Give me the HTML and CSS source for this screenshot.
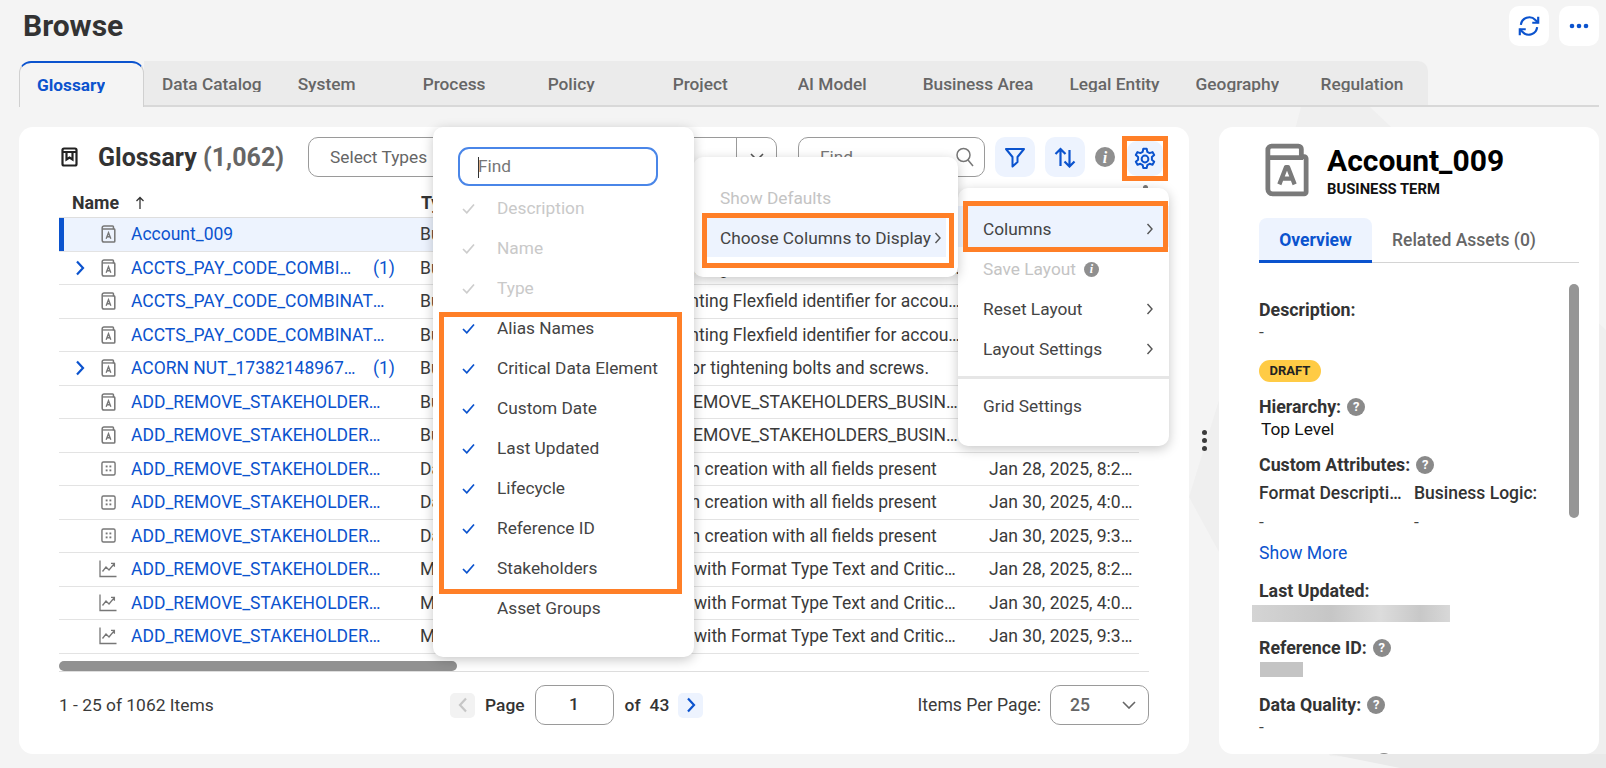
FILE: index.html
```html
<!DOCTYPE html>
<html lang="en">
<head>
<meta charset="utf-8">
<title>Browse</title>
<link rel="stylesheet" href="styles.css">
</head>
<body>
<svg class="sprite" width="0" height="0" aria-hidden="true">
  <symbol id="i-term" viewBox="0 0 16 20"><path d="M3 1h9.500a1 1 0 0 1 1 1v2.200h.5a1 1 0 0 1 1 1V18a1 1 0 0 1-1 1H3a2 2 0 0 1-2-2V3a2 2 0 0 1 2-2z" fill="none" stroke="currentColor" stroke-width="1.700"/><path d="M1.500 4.400H14" fill="none" stroke="currentColor" stroke-width="1.500"/><path d="M5.400 15.400L8 8.600l2.600 6.800M6.400 13h3.200" fill="none" stroke="currentColor" stroke-width="1.500"/></symbol>
  <symbol id="i-elem" viewBox="0 0 16 16"><rect x="1" y="1" width="14" height="14" rx="1.600" fill="none" stroke="currentColor" stroke-width="1.500"/><g fill="currentColor"><rect x="5" y="4.800" width="2" height="2"/><rect x="9" y="4.800" width="2" height="2"/><rect x="5" y="9" width="2" height="2"/><rect x="9" y="9" width="2" height="2"/></g></symbol>
  <symbol id="i-metric" viewBox="0 0 18 18"><path d="M1 0.500V16.500H17.500" fill="none" stroke="currentColor" stroke-width="1.300"/><path d="M3.500 11.500L7 7l3 3 5-6M12 3.400h3.400v3.400" fill="none" stroke="currentColor" stroke-width="1.300"/></symbol>
  <symbol id="i-chev" viewBox="0 0 10 16"><path d="M2 1.500L8 8l-6 6.500" fill="none" stroke="currentColor" stroke-width="2.200"/></symbol>
  <symbol id="i-thin" viewBox="0 0 8 14"><path d="M1.500 2L6 7l-4.500 5" fill="none" stroke="currentColor" stroke-width="1.400"/></symbol>
  <symbol id="i-down" viewBox="0 0 14 8"><path d="M1 1l6 6 6-6" fill="none" stroke="currentColor" stroke-width="1.600"/></symbol>
  <symbol id="i-check" viewBox="0 0 13 11"><path d="M1 6l3.800 3.800L12 1.500" fill="none" stroke="currentColor" stroke-width="1.700"/></symbol>
</svg>

<div class="page">
  <svg class="bg-shapes" viewBox="0 0 1606 768" aria-hidden="true">
    <polygon points="1301,107 1370,107 1606,330 1606,768 1330,756 1189,497 1250,300" fill="#efefef"/>
    <polygon points="1330,754 1606,754 1606,768 1400,768" fill="#e9e9e9"/>
  </svg>

  <header class="topbar">
    <h1 class="page-title">Browse</h1>
    <div class="top-actions">
      <button class="icon-btn white"><svg width="26" height="26" viewBox="0 0 24 24" fill="none" stroke="#0b53ce" stroke-width="2"><path d="M4.500 11a7.800 7.800 0 0 1 13.400-4.600L20.500 9"/><path d="M20.500 3.500V9H15"/><path d="M19.500 13a7.800 7.800 0 0 1-13.400 4.600L3.500 15"/><path d="M3.500 20.500V15H9"/></svg></button>
      <button class="icon-btn white"><svg width="22" height="6" viewBox="0 0 22 6" fill="#0b53ce"><circle cx="4" cy="3" r="2.300"/><circle cx="11" cy="3" r="2.300"/><circle cx="18" cy="3" r="2.300"/></svg></button>
    </div>
  </header>

  <nav class="tabs">
    <div class="tab active"><span>Glossary</span></div>
    <div class="tab"><span>Data Catalog</span></div>
    <div class="tab"><span>System</span></div>
    <div class="tab"><span>Process</span></div>
    <div class="tab"><span>Policy</span></div>
    <div class="tab"><span>Project</span></div>
    <div class="tab"><span>AI Model</span></div>
    <div class="tab"><span>Business Area</span></div>
    <div class="tab"><span>Legal Entity</span></div>
    <div class="tab"><span>Geography</span></div>
    <div class="tab"><span>Regulation</span></div>
  </nav>

  <main class="panels">
    <section class="panel list-panel">
      <div class="toolbar">
        <svg class="book" width="17" height="20" viewBox="0 0 17 20" fill="none" stroke="#222" stroke-width="2.200"><rect x="1.500" y="1.500" width="14" height="17" rx="1.500"/><path d="M1.500 5h14M5.500 5v7.500l3-2 3 2V5"/></svg>
        <h2 class="list-title">Glossary <span class="count">(1,062)</span></h2>
        <div class="select-types"><span>Select Types</span><span class="select-caret"><svg width="14" height="8"><use href="#i-down"/></svg></span></div>
        <div class="find-box"><span>Find</span><svg width="20" height="22" viewBox="0 0 20 22" fill="none" stroke="#777" stroke-width="1.500"><circle cx="8.500" cy="9" r="6.500"/><path d="M13 14l5 6"/></svg></div>
        <button class="icon-btn tint"><svg width="22" height="21" viewBox="0 0 22 21" fill="none" stroke="#0b53ce" stroke-width="2" stroke-linejoin="round"><path d="M2 2h18l-6.500 8v5l-5 4.500V10z"/></svg></button>
        <button class="icon-btn tint"><svg width="22" height="21" viewBox="0 0 22 21" fill="none" stroke="#0b53ce" stroke-width="2.200"><path d="M6.500 19V2M1.500 7l5-5 5 5"/><path d="M15.500 3v16.500M10.500 14.500l5 5 5-5"/></svg></button>
        <span class="info-dot big">i</span>
        <button class="icon-btn tint gear"><svg width="24" height="24" viewBox="0 0 24 24" fill="none" stroke="#0b53ce" stroke-width="2" stroke-linejoin="round"><circle cx="12" cy="12" r="3.400"/><path d="M10.300 1.800h3.400l.6 3 2.300 1.300 2.900-1 1.700 3-2.300 2v2.700l2.300 2-1.700 3-2.900-1-2.300 1.300-.6 3h-3.400l-.6-3-2.300-1.300-2.900 1-1.700-3 2.300-2v-2.700l-2.300-2 1.700-3 2.900 1 2.300-1.300z"/></svg></button>
      </div>

      <div class="thead">
        <div class="th-name">Name <svg width="10" height="14" viewBox="0 0 10 14" fill="none" stroke="#333" stroke-width="1.300"><path d="M5 13V2M1.500 5L5 1.500 8.500 5"/></svg></div>
        <div>Type</div>
        <div>Description</div>
        <div>Last Updated</div>
        <i class="col-menu"></i>
      </div>

      <div class="tbody">
        <div class="row selected"><span class="expander"></span><svg class="asset" width="15" height="18"><use href="#i-term"/></svg><a class="name">Account_009</a><span class="type">Business Term</span><span class="desc">Accounting Flexfield identifier for accounts</span><span class="date">Jan 28, 2025, 8:21 AM</span></div>
        <div class="row"><svg class="expander" width="10" height="16"><use href="#i-chev"/></svg><svg class="asset" width="15" height="18"><use href="#i-term"/></svg><a class="name short">ACCTS_PAY_CODE_COMBINATIONS</a><span class="kids">(1)</span><span class="type">Business Term</span><span class="desc">Accounting Flexfield identifier for accounts</span><span class="date">Jan 28, 2025, 8:21 AM</span></div>
        <div class="row"><span class="expander"></span><svg class="asset" width="15" height="18"><use href="#i-term"/></svg><a class="name">ACCTS_PAY_CODE_COMBINATIONS_ID</a><span class="type">Business Term</span><span class="desc">Accounting Flexfield identifier for accounts payable</span><span class="date">Jan 28, 2025, 8:21 AM</span></div>
        <div class="row"><span class="expander"></span><svg class="asset" width="15" height="18"><use href="#i-term"/></svg><a class="name">ACCTS_PAY_CODE_COMBINATIONS_ID</a><span class="type">Business Term</span><span class="desc">Accounting Flexfield identifier for accounts payable</span><span class="date">Jan 28, 2025, 8:21 AM</span></div>
        <div class="row"><svg class="expander" width="10" height="16"><use href="#i-chev"/></svg><svg class="asset" width="15" height="18"><use href="#i-term"/></svg><a class="name short">ACORN NUT_1738214896712</a><span class="kids">(1)</span><span class="type">Business Term</span><span class="desc">Used for tightening bolts and screws.</span><span class="date">Jan 28, 2025, 8:21 AM</span></div>
        <div class="row"><span class="expander"></span><svg class="asset" width="15" height="18"><use href="#i-term"/></svg><a class="name">ADD_REMOVE_STAKEHOLDERS_BUSINESS</a><span class="type">Business Term</span><span class="desc">ADD_REMOVE_STAKEHOLDERS_BUSINESS_TERM</span><span class="date">Jan 28, 2025, 8:21 AM</span></div>
        <div class="row"><span class="expander"></span><svg class="asset" width="15" height="18"><use href="#i-term"/></svg><a class="name">ADD_REMOVE_STAKEHOLDERS_BUSINESS</a><span class="type">Business Term</span><span class="desc">ADD_REMOVE_STAKEHOLDERS_BUSINESS_TERM</span><span class="date">Jan 30, 2025, 4:02 PM</span></div>
        <div class="row"><span class="expander"></span><svg class="asset" width="15" height="15"><use href="#i-elem"/></svg><a class="name">ADD_REMOVE_STAKEHOLDERS_DATA</a><span class="type">Data Element</span><span class="desc">Domain creation with all fields present</span><span class="date">Jan 28, 2025, 8:21 AM</span></div>
        <div class="row"><span class="expander"></span><svg class="asset" width="15" height="15"><use href="#i-elem"/></svg><a class="name">ADD_REMOVE_STAKEHOLDERS_DATA</a><span class="type">Data Element</span><span class="desc">Domain creation with all fields present</span><span class="date">Jan 30, 2025, 4:02 PM</span></div>
        <div class="row"><span class="expander"></span><svg class="asset" width="15" height="15"><use href="#i-elem"/></svg><a class="name">ADD_REMOVE_STAKEHOLDERS_DATA</a><span class="type">Data Element</span><span class="desc">Domain creation with all fields present</span><span class="date">Jan 30, 2025, 9:31 PM</span></div>
        <div class="row"><span class="expander"></span><svg class="asset metric" width="18" height="18"><use href="#i-metric"/></svg><a class="name">ADD_REMOVE_STAKEHOLDERS_METRIC</a><span class="type">Metric</span><span class="desc">Metric with Format Type Text and Critical Data Element</span><span class="date">Jan 28, 2025, 8:21 AM</span></div>
        <div class="row"><span class="expander"></span><svg class="asset metric" width="18" height="18"><use href="#i-metric"/></svg><a class="name">ADD_REMOVE_STAKEHOLDERS_METRIC</a><span class="type">Metric</span><span class="desc">Metric with Format Type Text and Critical Data Element</span><span class="date">Jan 30, 2025, 4:02 PM</span></div>
        <div class="row"><span class="expander"></span><svg class="asset metric" width="18" height="18"><use href="#i-metric"/></svg><a class="name">ADD_REMOVE_STAKEHOLDERS_METRIC</a><span class="type">Metric</span><span class="desc">Metric with Format Type Text and Critical Data Element</span><span class="date">Jan 30, 2025, 9:31 PM</span></div>
        <div class="row"><span class="expander"></span><svg class="asset" width="15" height="18"><use href="#i-term"/></svg></div>
        <div class="hscroll"></div>
      </div>

      <footer class="pager">
        <div>1 - 25 of 1062 Items</div>
        <div class="pager-mid">
          <button class="page-btn off"><svg width="10" height="16"><use href="#i-chev"/></svg></button>
          <span class="page-word">Page</span>
          <div class="page-input">1</div>
          <span class="page-word">of</span>
          <span class="page-word pages">43</span>
          <button class="page-btn on"><svg width="10" height="16"><use href="#i-chev"/></svg></button>
        </div>
        <div class="per-page">Items Per Page:<div class="per-select"><span>25</span><svg width="14" height="8"><use href="#i-down"/></svg></div></div>
      </footer>
    </section>

    <div class="splitter"><i></i><i></i><i></i></div>

    <aside class="panel detail-panel">
      <div class="detail-head">
        <svg class="detail-icon" width="44" height="54" viewBox="0 0 46 56" fill="none" stroke="#7a7a7a" stroke-width="5" stroke-linejoin="round"><path d="M7 3h28a3 3 0 0 1 3 3v8h3a2 2 0 0 1 2 2v35a2 2 0 0 1-2 2H8a5 5 0 0 1-5-5V7a4 4 0 0 1 4-4z"/><path d="M4 15h36"/><path d="M15 43l7-18h2l7 18M17 37h12" stroke-width="4.500"/></svg>
        <div>
          <div class="detail-title">Account_009</div>
          <div class="detail-sub">BUSINESS TERM</div>
        </div>
      </div>
      <div class="detail-tabs">
        <div class="dtab active">Overview</div>
        <div class="dtab">Related Assets (0)</div>
      </div>
      <div class="label first">Description:</div>
      <div class="value">-</div>
      <div class="badge">DRAFT</div>
      <div class="label gap-h">Hierarchy: <span class="help">?</span></div>
      <div class="value dark">Top Level</div>
      <div class="label gap-c">Custom Attributes: <span class="help">?</span></div>
      <div class="attrs">
        <div class="attr-name ell">Format Description:</div>
        <div class="attr-name">Business Logic:</div>
        <div class="value">-</div>
        <div class="value">-</div>
      </div>
      <a class="show-more">Show More</a>
      <div class="label gap-l">Last Updated:</div>
      <div class="blur wide"></div>
      <div class="label gap-r">Reference ID: <span class="help">?</span></div>
      <div class="blur small"></div>
      <div class="label gap-d">Data Quality: <span class="help">?</span></div>
      <div class="value">-</div>
      <div class="label gap-s">Stakeholders: <span class="help">?</span></div>
      <div class="vscroll"></div>
    </aside>
  </main>

  <div class="menu menu-layout">
    <div class="mi cols">Columns<svg width="8" height="14"><use href="#i-thin"/></svg></div>
    <div class="mi off">Save Layout <span class="info-dot">i</span></div>
    <div class="mi">Reset Layout<svg width="8" height="14"><use href="#i-thin"/></svg></div>
    <div class="mi">Layout Settings<svg width="8" height="14"><use href="#i-thin"/></svg></div>
    <hr class="menu-rule">
    <div class="mi">Grid Settings</div>
  </div>

  <div class="menu menu-cols">
    <div class="mi off">Show Defaults</div>
    <div class="mi choose">Choose Columns to Display<svg width="8" height="14"><use href="#i-thin"/></svg></div>
  </div>

  <div class="menu menu-pick">
    <div class="pick-find"><span class="caret"></span>Find</div>
    <div class="pi off"><svg width="13" height="11"><use href="#i-check"/></svg>Description</div>
    <div class="pi off"><svg width="13" height="11"><use href="#i-check"/></svg>Name</div>
    <div class="pi off"><svg width="13" height="11"><use href="#i-check"/></svg>Type</div>
    <div class="pi"><svg width="13" height="11"><use href="#i-check"/></svg>Alias Names</div>
    <div class="pi"><svg width="13" height="11"><use href="#i-check"/></svg>Critical Data Element</div>
    <div class="pi"><svg width="13" height="11"><use href="#i-check"/></svg>Custom Date</div>
    <div class="pi"><svg width="13" height="11"><use href="#i-check"/></svg>Last Updated</div>
    <div class="pi"><svg width="13" height="11"><use href="#i-check"/></svg>Lifecycle</div>
    <div class="pi"><svg width="13" height="11"><use href="#i-check"/></svg>Reference ID</div>
    <div class="pi"><svg width="13" height="11"><use href="#i-check"/></svg>Stakeholders</div>
    <div class="pi none"><span class="no-check"></span>Asset Groups</div>
  </div>

  <div class="mark mark-gear"></div>
  <div class="mark mark-columns"></div>
  <div class="mark mark-choose"></div>
  <div class="mark mark-list"></div>
</div>
</body>
</html>
```

FILE: styles.css
```css
* { box-sizing: border-box; }
html, body { margin: 0; padding: 0; }
body { font-family: Roboto, "Liberation Sans", sans-serif; font-size: 17.3px; color: #3a3a3a; background: #f4f4f4; }
.sprite { position: absolute; }
button { font: inherit; border: 0; padding: 0; }

.page { position: relative; width: 1606px; height: 768px; overflow: hidden; padding: 0 7px 0 19px; background: #f4f4f4; }
.bg-shapes { position: absolute; left: 0; top: 0; width: 1606px; height: 768px; }
.topbar, .tabs, .panels { position: relative; }

.topbar { height: 61px; display: flex; justify-content: space-between; padding-top: 6px; padding-left: 4px; }
.page-title { margin: 0; font-size: 30px; font-weight: 700; line-height: 40px; color: #333; }
.top-actions { display: flex; gap: 10px; }
.icon-btn { width: 40px; height: 40px; border-radius: 10px; display: flex; align-items: center; justify-content: center; flex: none; }
.icon-btn.white { background: #fff; }
.icon-btn.tint { background: #edf3fe; }

.tabs { height: 46px; display: flex; border-bottom: 2px solid #d8d8d8; }
.tab { min-width: 125px; height: 44px; padding: 0 18px; background: #ebebeb; color: #666; font-weight: 500; display: flex; flex: none; }
.tab span { display: block; height: 31px; line-height: 46px; overflow: hidden; white-space: nowrap; }
.tab:last-child { border-top-right-radius: 10px; }
.tab.active { height: 46px; margin-bottom: -2px; background: #f4f4f4; color: #0b53ce; font-weight: 700; border: 1px solid #d0d0d0; border-bottom: 0; border-top: 2px solid #0b53ce; border-radius: 12px 12px 0 0; padding: 0 17px; }
.tab.active span { line-height: 44px; height: 30px; }

.panels { margin-top: 20px; height: 627px; display: flex; }
.panel { background: #fff; border-radius: 14px; position: relative; overflow: hidden; }
.list-panel { width: 1170px; padding: 10px 40px 0; flex: none; }
.splitter { width: 30px; display: flex; flex-direction: column; align-items: center; justify-content: center; gap: 3px; flex: none; }
.splitter i { width: 5px; height: 5px; border-radius: 50%; background: #3c3c3c; }
.detail-panel { width: 380px; padding: 16px 0 0 40px; flex: none; }

.toolbar { height: 40px; display: flex; align-items: center; }
.book { margin-left: 2px; flex: none; }
.list-title { margin: 0 0 0 20px; font-size: 25px; font-weight: 700; width: 210px; flex: none; white-space: nowrap; color: #333; }
.count { color: #666; }
.select-types { width: 469px; height: 40px; flex: none; border: 1px solid #9a9a9a; border-radius: 10px; display: flex; align-items: center; justify-content: space-between; padding-left: 21px; color: #666; }
.select-caret { width: 40px; height: 38px; border-left: 1px solid #9a9a9a; display: flex; align-items: center; justify-content: center; color: #555; }
.find-box { width: 187px; height: 40px; flex: none; margin-left: 21px; border: 1px solid #9a9a9a; border-radius: 10px; display: flex; align-items: center; justify-content: space-between; padding: 0 9px 0 21px; color: #777; }
.toolbar .icon-btn { margin-left: 10px; }
.info-dot { display: inline-flex; width: 15px; height: 15px; flex: none; border-radius: 50%; background: #8f8f8f; color: #fff; font: italic 700 12px/15px "Liberation Serif", serif; align-items: center; justify-content: center; }
.info-dot.big { width: 20px; height: 20px; margin-left: 10px; font-size: 16px; }
.toolbar .gear { width: 36px; height: 35px; margin-left: 12px; margin-top: 3px; }

.thead { position: relative; height: 40px; width: 1080px; display: grid; grid-template-columns: 362px 230px 338px 150px; align-items: end; padding-bottom: 3px; font-weight: 700; font-size: 17.8px; line-height: 22px; color: #333; }
.th-name { padding-left: 13px; display: flex; align-items: center; gap: 16px; }
.col-menu { position: absolute; left: 1084px; top: 8px; width: 5px; height: 5px; border-radius: 50%; background: #777; }

.tbody { position: relative; height: 455px; overflow: hidden; border-top: 1px solid #dedede; border-bottom: 1px solid #dedede; }
.row { height: 33.500px; width: 1080px; position: relative; display: flex; align-items: center; border-bottom: 1.500px solid #e3e3e3; white-space: nowrap; font-size: 17.5px; }
.row.selected { background: #edf3fe; box-shadow: inset 5px 0 0 #0b53ce; }
.expander { width: 10px; margin-left: 16px; color: #0b53ce; flex: none; }
.asset { color: #777; flex: none; position: absolute; left: 42px; }
.asset.metric { left: 40px; }
.name { position: absolute; left: 72px; width: 254px; overflow: hidden; text-overflow: ellipsis; color: #0b53ce; }
.name.short { width: 226px; }
.kids { position: absolute; left: 314px; color: #0b53ce; }
.type { position: absolute; left: 361px; }
.desc { position: absolute; left: 581px; width: 320px; overflow: hidden; text-overflow: ellipsis; }
.date { position: absolute; left: 930px; width: 147px; overflow: hidden; text-overflow: ellipsis; }
.hscroll { position: absolute; left: 0; bottom: 0; width: 398px; height: 10px; border-radius: 5px; background: #919191; }

.pager { height: 66px; display: grid; grid-template-columns: 391px 1fr auto; align-items: center; font-size: 17.4px; }
.pager-mid { display: flex; align-items: center; }
.page-btn { width: 25px; height: 25px; border-radius: 5px; display: flex; align-items: center; justify-content: center; }
.page-btn.off { background: #f2f2f2; color: #c6c6c6; }
.page-btn.off svg { transform: scaleX(-1); }
.page-btn.on { background: #edf3fe; color: #0b53ce; margin-left: 9px; }
.page-word { font-weight: 500; margin-left: 10px; color: #333; }
.page-input + .page-word { margin-left: 11px; }
.pages { margin-left: 9px; }
.page-input { width: 79px; height: 40px; margin-left: 10px; border: 1px solid #9a9a9a; border-radius: 10px; text-align: center; line-height: 36px; font-weight: 500; color: #333; }
.per-page { display: flex; align-items: center; gap: 9px; font-size: 17.6px; }
.per-select { width: 99px; height: 40px; border: 1px solid #9a9a9a; border-radius: 10px; display: flex; align-items: center; justify-content: space-between; padding: 0 12px 0 19px; font-weight: 500; color: #666; }

.detail-head { display: flex; gap: 18px; height: 54px; padding-left: 6px; }
.detail-icon { flex: none; }
.detail-title { font-size: 30px; font-weight: 700; line-height: 34px; color: #000; margin-top: 1px; }
.detail-sub { font-size: 14.8px; font-weight: 700; line-height: 16px; margin-top: 3px; color: #111; }
.detail-tabs { margin-top: 21px; width: 320px; height: 45px; display: flex; border-bottom: 1.500px solid #d4d4d4; font-size: 17.5px; }
.dtab { padding: 0 20px; line-height: 44px; color: #666; font-weight: 500; }
.dtab.active { width: 113px; height: 45px; background: #edf3fe; color: #0b53ce; font-weight: 700; border-bottom: 3px solid #0b53ce; border-radius: 8px 8px 0 0; text-align: center; padding: 0; }
.label { line-height: 22px; font-weight: 700; color: #333; display: flex; align-items: center; gap: 6px; font-size: 17.8px; white-space: nowrap; }
.value { line-height: 22px; color: #444; }
.value.dark { color: #111; padding-left: 2px; }
.label.first { margin-top: 36px; }
.badge { margin-top: 17px; width: 62px; height: 22px; border-radius: 11px; background: #ffcb45; color: #222; font-size: 13px; font-weight: 700; line-height: 22px; text-align: center; }
.gap-h { margin-top: 14px; }
.gap-c { margin-top: 14px; }
.attrs { margin-top: 6px; width: 300px; display: grid; grid-template-columns: 155px 145px; row-gap: 7px; }
.attr-name { font-weight: 500; line-height: 22px; font-size: 17.5px; color: #333; white-space: nowrap; }
.attr-name.ell { width: 143px; overflow: hidden; text-overflow: ellipsis; }
.show-more { display: block; margin-top: 9px; line-height: 22px; font-size: 17.6px; color: #0b53ce; }
.gap-l { margin-top: 16px; }
.gap-r { margin-top: 15px; }
.gap-d { margin-top: 17px; }
.gap-s { margin-top: 15px; align-items: flex-start; }
.help { width: 18px; height: 18px; border-radius: 50%; background: #8a8a8a; color: #fff; font-size: 13px; font-weight: 700; line-height: 18px; text-align: center; display: inline-block; }
.blur { background: #cfcfcf; margin-top: 3px; }
.blur.wide { width: 198px; height: 17px; margin-left: -7px; background: linear-gradient(90deg, #d4d4d4, #c6c6c6 40%, #dcdcdc 65%, #c8c8c8 85%, #d8d8d8); }
.blur.small { width: 43px; height: 15px; margin-left: 1px; background: #c4c4c4; }
.vscroll { position: absolute; left: 350px; top: 157px; width: 10px; height: 234px; border-radius: 5px; background: #969696; }

.menu { position: absolute; background: #fff; border-radius: 10px; box-shadow: 0 3px 12px rgba(0,0,0,.22); }
.menu-pick { left: 433px; top: 127px; width: 261px; height: 530px; padding: 20px 0 0 25px; z-index: 3; }
.pick-find { width: 200px; height: 39px; border: 2px solid #4a86e8; border-radius: 11px; margin-bottom: 2px; padding-left: 18px; line-height: 35px; color: #777; position: relative; }
.caret { position: absolute; left: 18px; top: 8px; width: 1px; height: 21px; background: #333; }
.pi { height: 40px; display: flex; align-items: center; gap: 22px; margin-left: 4px; white-space: nowrap; color: #444; }
.pi svg { color: #0b53ce; flex: none; }
.pi.off { color: #c9c9c9; }
.pi.off svg { color: #cdcdcd; }
.no-check { width: 13px; flex: none; }

.menu-cols { left: 693px; top: 157px; width: 265px; height: 120px; padding: 21px 12px 0 14px; z-index: 2; }
.mi { height: 40px; display: flex; align-items: center; justify-content: space-between; white-space: nowrap; color: #444; }
.mi.off { color: #c4c4c4; justify-content: flex-start; gap: 8px; }
.menu-cols .mi { padding: 0 4px 0 13px; }
.mi.choose { height: 39px; background: #edf3fe; }
.menu-layout { left: 958px; top: 188px; width: 211px; height: 258px; padding-top: 18px; z-index: 1; }
.menu-layout .mi { padding: 0 15px 0 25px; }
.mi.cols { height: 43px; padding-top: 3px; background: linear-gradient(#edf3fe 41px, #fff 41px); }
.mi svg { flex: none; color: #555; }
.menu-rule { margin: 7px 0; height: 3px; border: 0; background: #e6e6e6; }

.mark { position: absolute; border: 5px solid #ff7f27; z-index: 4; }
.mark-gear { left: 1122px; top: 136px; width: 46px; height: 45px; }
.mark-columns { left: 963px; top: 201px; width: 205px; height: 51px; }
.mark-choose { left: 702px; top: 213px; width: 252px; height: 55px; }
.mark-list { left: 439px; top: 312px; width: 243px; height: 282px; }
```
